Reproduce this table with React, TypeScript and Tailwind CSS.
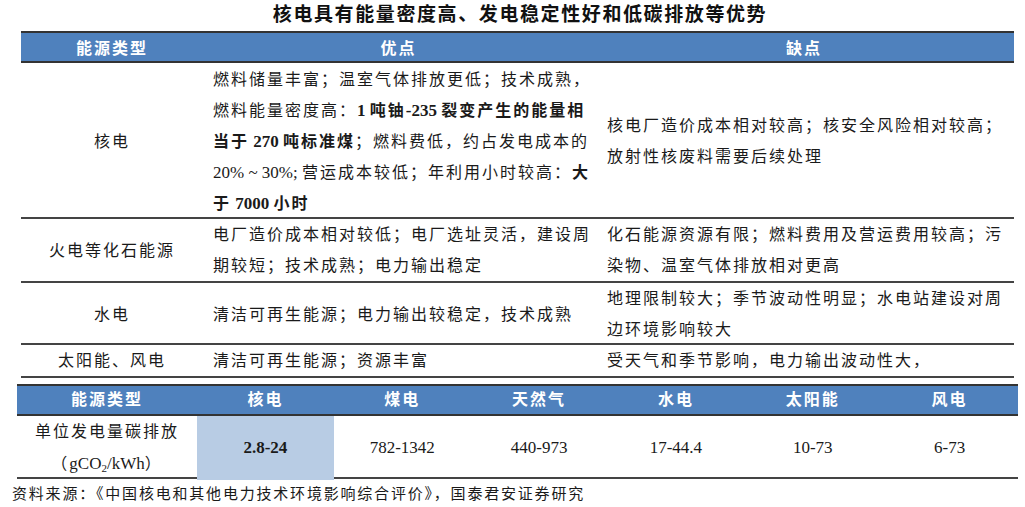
import React from "react";

const FONT = `font-["Liberation_Serif","Noto_Sans_CJK_SC",serif]`;

// Latin run: no extra tracking, slightly larger like Times in the source doc
function L({ children, bold }: { children: React.ReactNode; bold?: boolean }) {
  return (
    <span className={`text-[17px] tracking-normal ${bold ? "font-bold" : ""}`}>
      {children}
    </span>
  );
}

const rows = [
  {
    type: "火电等化石能源",
    h: "h-[64px]",
    pros: (
      <>
        电厂造价成本相对较低；电厂选址灵活，建设周
        <br />
        期较短；技术成熟；电力输出稳定
      </>
    ),
    cons: (
      <>
        化石能源资源有限；燃料费用及营运费用较高；污
        <br />
        染物、温室气体排放相对更高
      </>
    ),
  },
  {
    type: "水电",
    h: "h-[62px]",
    pros: <>清洁可再生能源；电力输出较稳定，技术成熟</>,
    cons: (
      <>
        地理限制较大；季节波动性明显；水电站建设对周
        <br />
        边环境影响较大
      </>
    ),
  },
  {
    type: "太阳能、风电",
    h: "h-[33px]",
    pros: <>清洁可再生能源；资源丰富</>,
    cons: <>受天气和季节影响，电力输出波动性大，</>,
  },
];

const emissions = [
  { name: "核电", value: "2.8-24", hl: true },
  { name: "煤电", value: "782-1342" },
  { name: "天然气", value: "440-973" },
  { name: "水电", value: "17-44.4" },
  { name: "太阳能", value: "10-73" },
  { name: "风电", value: "6-73" },
];

export default function App() {
  return (
    <div className={`w-[1025px] h-[507px] bg-white text-[#1a1a1a] ${FONT}`}>
      <h1 className="h-[31px] flex items-center justify-center pl-[15px] text-[19px] font-bold tracking-[1.6px] text-[#111]">
        核电具有能量密度高、发电稳定性好和低碳排放等优势
      </h1>

      {/* Table 1: pros and cons */}
      <div className="ml-[21px] w-[993px] text-[16px] tracking-[2px] leading-[31px]">
        <div className="grid grid-cols-[182px_391px_1fr] h-[32px] items-center bg-[#4f81bd] border-y-2 border-[#333] text-white font-semibold">
          <div className="text-center">能源类型</div>
          <div className="text-center">优点</div>
          <div className="text-center">缺点</div>
        </div>

        <div className="grid grid-cols-[182px_391px_1fr] h-[156px] items-center border-b-2 border-[#444]">
          <div className="text-center">核电</div>
          <div className="self-start pt-[1px] pl-[10px] whitespace-nowrap">
            燃料储量丰富；温室气体排放更低；技术成熟，
            <br />
            燃料能量密度高：
            <span className="font-bold">
              <L bold>1 </L>吨铀<L bold>-235 </L>裂变产生的能量相
            </span>
            <br />
            <span className="font-bold">
              当于<L bold> 270 </L>吨标准煤
            </span>
            ；燃料费低，约占发电成本的
            <br />
            <L>20% ~ 30%; </L>营运成本较低；年利用小时较高：
            <span className="font-bold">大</span>
            <br />
            <span className="font-bold">
              于<L bold> 7000 </L>小时
            </span>
          </div>
          <div className="pl-[13px] whitespace-nowrap">
            核电厂造价成本相对较高；核安全风险相对较高；
            <br />
            放射性核废料需要后续处理
          </div>
        </div>

        {rows.map((r) => (
          <div
            key={r.type}
            className={`grid grid-cols-[182px_391px_1fr] ${r.h} items-center border-b-2 border-[#444]`}
          >
            <div className="text-center">{r.type}</div>
            <div className="pl-[10px] whitespace-nowrap">{r.pros}</div>
            <div className="pl-[13px] whitespace-nowrap">{r.cons}</div>
          </div>
        ))}
      </div>

      {/* Table 2: carbon emissions per kWh */}
      <div className="mt-[6px] ml-[17px] w-[1001px] text-[16px] tracking-[2px]">
        <div className="grid grid-cols-[180px_repeat(6,1fr)] h-[32px] items-center bg-[#4f81bd] border-y-2 border-[#333] text-white font-semibold">
          <div className="text-center">能源类型</div>
          {emissions.map((e) => (
            <div key={e.name} className="text-center">
              {e.name}
            </div>
          ))}
        </div>
        <div className="grid grid-cols-[180px_repeat(6,1fr)] h-[63px] border-b-2 border-[#444]">
          <div className="flex flex-col items-center justify-center leading-[32px]">
            <span>单位发电量碳排放</span>
            <span>
              （<L>
                gCO<sub className="text-[11px] align-baseline relative top-[3px]">2</sub>/kWh
              </L>）
            </span>
          </div>
          {emissions.map((e) => (
            <div
              key={e.name}
              className={`flex items-center justify-center ${e.hl ? "bg-[#b8cce4]" : ""}`}
            >
              <L bold={e.hl}>{e.value}</L>
            </div>
          ))}
        </div>
      </div>

      <p className="ml-[12px] mt-[6px] text-[15px] tracking-[1.8px] leading-[18px]">
        资料来源：《中国核电和其他电力技术环境影响综合评价》，国泰君安证券研究
      </p>
    </div>
  );
}
